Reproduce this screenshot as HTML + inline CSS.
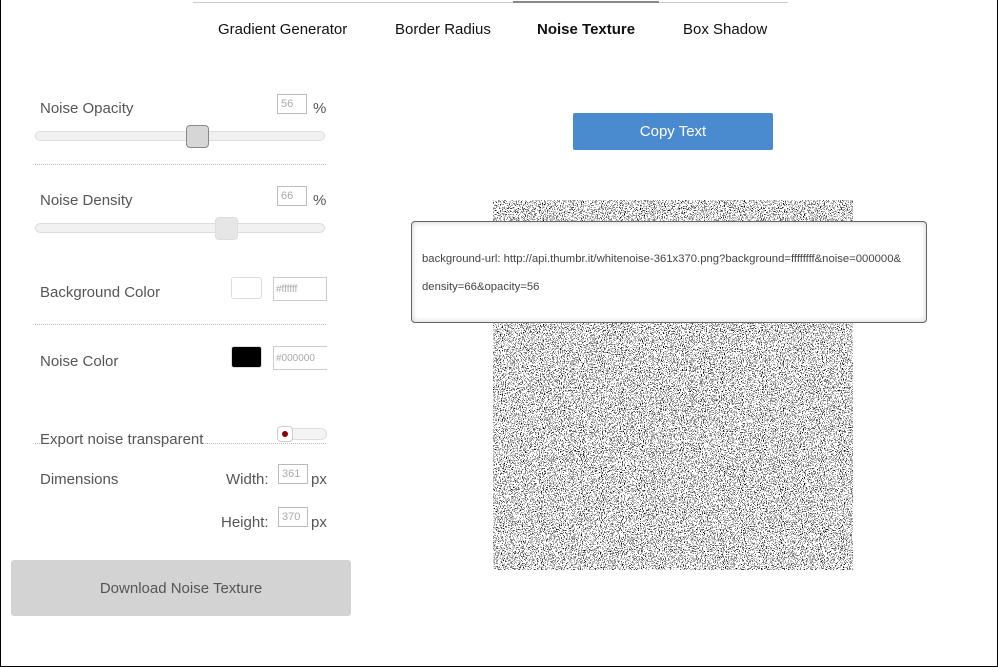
<!DOCTYPE html>
<html><head><meta charset="utf-8"><style>
*{box-sizing:border-box;margin:0;padding:0}
body{width:998px;height:667px;overflow:hidden;background:#fff;font-family:"Liberation Sans",sans-serif;position:relative}
.frame{position:absolute;left:0;top:0;width:998px;height:667px;border:1px solid #000;border-top:none}
.abs{position:absolute}
.nav{font-size:15px;color:#111;top:21px}
.lbl{font-size:15px;color:#555;}
.num{position:absolute;width:30px;height:20px;border:1px solid #bbb;font-size:11px;color:#aaa;padding:3px 3px}
.track{position:absolute;height:10px;border:1px solid #ddd;border-radius:5px;background:#f1f1f1}
.thumb{position:absolute;width:23px;height:23px;border-radius:4px}
.dots{position:absolute;border-top:1px dotted #bbb;height:0}
</style></head><body>
<div class="frame"></div>
<div class="abs" style="left:193px;top:2px;width:595px;height:1px;background:#ccc"></div>
<div class="abs" style="left:513px;top:1px;width:146px;height:2px;background:#888"></div>
<div class="abs nav" style="left:218px">Gradient Generator</div>
<div class="abs nav" style="left:395px">Border Radius</div>
<div class="abs nav" style="left:537px;font-weight:bold">Noise Texture</div>
<div class="abs nav" style="left:683px">Box Shadow</div>

<div class="abs lbl" style="left:40px;top:100px">Noise Opacity</div>
<div class="num" style="left:277px;top:94px">56</div>
<div class="abs lbl" style="left:313px;top:100px">%</div>
<div class="track" style="left:35px;top:131px;width:290px"></div>
<div class="thumb" style="left:186px;top:125px;background:#d6d6d6;border:1px solid #888"></div>
<div class="dots" style="left:35px;top:164px;width:291px"></div>

<div class="abs lbl" style="left:40px;top:192px">Noise Density</div>
<div class="num" style="left:277px;top:186px">66</div>
<div class="abs lbl" style="left:313px;top:192px">%</div>
<div class="track" style="left:35px;top:223px;width:290px"></div>
<div class="thumb" style="left:215px;top:217px;background:#e6e6e6;border:1px solid #ddd"></div>

<div class="abs lbl" style="left:40px;top:284px">Background Color</div>
<div class="abs" style="left:231px;top:277px;width:31px;height:22px;border:1px solid #ddd;border-radius:3px;background:#fff"></div>
<div class="abs" style="left:273px;top:277px;width:54px;height:24px;border:1px solid #ccc;font-size:10px;color:#aaa;padding:6px 2px">#ffffff</div>
<div class="dots" style="left:35px;top:324px;width:291px"></div>

<div class="abs lbl" style="left:40px;top:353px">Noise Color</div>
<div class="abs" style="left:231px;top:346px;width:31px;height:22px;border:1px solid #ddd;border-radius:3px;background:#000"></div>
<div class="abs" style="left:273px;top:346px;width:54px;height:24px;border:1px solid #ccc;border-right:none;font-size:10px;color:#aaa;padding:6px 2px">#000000</div>

<div class="dots" style="left:35px;top:443px;width:291px"></div>
<div class="abs lbl" style="left:40px;top:431px;background:#fff">Export noise transparent</div>
<div class="abs" style="left:277px;top:428px;width:50px;height:12px;border:1px solid #ddd;border-radius:6px;background:#f4f4f4"></div>
<div class="abs" style="left:277px;top:426px;width:16px;height:16px;border:1px solid #ccc;border-radius:4px;background:#fff"></div>
<div class="abs" style="left:282px;top:431px;width:6px;height:6px;border-radius:50%;background:#800"></div>

<div class="abs lbl" style="left:40px;top:471px">Dimensions</div>
<div class="abs lbl" style="left:226px;top:471px">Width:</div>
<div class="num" style="left:278px;top:464px;width:30px">361</div>
<div class="abs lbl" style="left:311px;top:471px">px</div>
<div class="abs lbl" style="left:221px;top:514px">Height:</div>
<div class="num" style="left:278px;top:507px;width:30px">370</div>
<div class="abs lbl" style="left:311px;top:514px">px</div>

<div class="abs" style="left:11px;top:560px;width:340px;height:56px;background:#d3d3d3;border-radius:3px;color:#555;font-size:15px;text-align:center;line-height:58px">Download Noise Texture</div>

<div class="abs" style="left:573px;top:113px;width:200px;height:37px;background:#4a8bd0;color:#fff;font-size:15px;text-align:center;line-height:38px;border-radius:2px">Copy Text</div>

<svg class="abs" style="left:493px;top:200px" width="360" height="370">
<filter id="n" x="0" y="0" width="360" height="370" filterUnits="userSpaceOnUse"><feTurbulence type="fractalNoise" baseFrequency="0.95" numOctaves="2" seed="3" result="t"/><feColorMatrix in="t" type="matrix" values="0 0 0 0 0  0 0 0 0 0  0 0 0 0 0  -6 0 0 0 2.85"/><feComponentTransfer><feFuncA type="discrete" tableValues="0 1"/></feComponentTransfer></filter>
<rect width="360" height="370" fill="#fff"/>
<rect width="360" height="370" filter="url(#n)" fill="#000"/>
</svg>

<div class="abs" style="left:411px;top:221px;width:516px;height:102px;border:1px solid #666;border-radius:4px;background:#fff;box-shadow:inset 0 0 6px rgba(0,0,0,.2);font-size:11.3px;color:#444;padding:23px 10px;line-height:28px">background-url: http://api.thumbr.it/whitenoise-361x370.png?background=ffffffff&amp;noise=000000&amp;<br>density=66&amp;opacity=56</div>
</body></html>
